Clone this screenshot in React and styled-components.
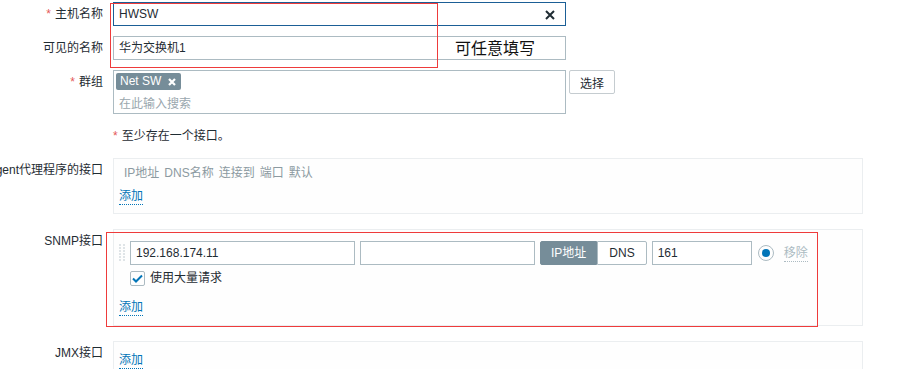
import styled, { createGlobalStyle } from "styled-components";

const GlobalStyle = createGlobalStyle`
  html, body {
    margin: 0;
    padding: 0;
    background: #ffffff;
  }
  body {
    font-family: "Liberation Sans", Arial, "Noto Sans CJK SC", sans-serif;
    font-size: 12px;
    color: #1f2c33;
  }
`;

const Page = styled.div`
  position: relative;
  width: 907px;
  height: 369px;
  overflow: hidden;
  padding-top: 2px;
  box-sizing: border-box;
`;

const FormGrid = styled.div`
  display: grid;
  grid-template-columns: 103px 1fr;
  column-gap: 10px;
  row-gap: 10px;
  align-items: start;
`;

const Label = styled.div`
  display: flex;
  justify-content: flex-end;
  white-space: nowrap;
  line-height: 24px;
  height: 24px;
`;

const Asterisk = styled.span`
  color: #e45959;
  margin-right: 4px;
`;

const Field = styled.div`
  display: flex;
  align-items: flex-start;
  gap: 3px;
`;

const TextBox = styled.div`
  position: relative;
  box-sizing: border-box;
  width: ${(p) => p.$w || 453}px;
  height: 24px;
  line-height: 22px;
  padding: 0 5px;
  border: 1px solid ${(p) => (p.$focus ? "#1b5f96" : "#acbbc2")};
  background: #fff;
  color: #1f2c33;
  white-space: nowrap;
`;

const ClearIcon = styled.svg`
  position: absolute;
  right: 10px;
  top: 7px;
`;

const MultiSelect = styled.div`
  box-sizing: border-box;
  width: 453px;
  height: 44px;
  border: 1px solid #acbbc2;
  padding: 2px;
  display: flex;
  flex-direction: column;
  align-items: flex-start;
  gap: 4px;
`;

const Tag = styled.span`
  display: inline-flex;
  align-items: center;
  gap: 7px;
  height: 17px;
  padding: 0 5px 0 4px;
  border-radius: 2px;
  background: #768d99;
  color: #fff;
  line-height: 17px;
`;

const Placeholder = styled.span`
  color: #9aa7ae;
  padding-left: 3px;
  line-height: 20px;
`;

const Button = styled.button`
  box-sizing: border-box;
  height: 24px;
  padding: 0 10px;
  border: 1px solid #c5ccd0;
  border-radius: 2px;
  background: #fff;
  color: #1f2c33;
  font: inherit;
`;

const Note = styled.div`
  line-height: 24px;
`;

const Table = styled.div`
  box-sizing: border-box;
  width: 750px;
  border: 1px solid #ebeef0;
  background: #fefefe;
  padding: ${(p) => p.$pad || "5px 5px 8px 5px"};
  margin-bottom: 5px;
  display: flex;
  flex-direction: column;
  align-items: flex-start;
`;

const HeaderRow = styled.div`
  display: flex;
  gap: 5px;
  padding-left: 5px;
  line-height: 18px;
  color: #8c9aa1;
`;

const AddLink = styled.span`
  color: #0275b8;
  margin-top: ${(p) => p.$top || 0}px;
  border-bottom: 1px dotted #0275b8;
  line-height: 16px;
  padding-top: 1px;
`;

const InterfaceRow = styled.div`
  display: flex;
  align-items: center;
  gap: 5px;
`;

const Toggle = styled.div`
  display: flex;
`;

const ToggleItem = styled.span`
  box-sizing: border-box;
  height: 24px;
  line-height: 22px;
  padding: 0 ${(p) => (p.$active ? 10 : 11)}px;
  border: 1px solid ${(p) => (p.$active ? "#768d99" : "#acbbc2")};
  border-radius: ${(p) => (p.$active ? "2px 0 0 2px" : "0 2px 2px 0")};
  background: ${(p) => (p.$active ? "#768d99" : "#fff")};
  color: ${(p) => (p.$active ? "#fff" : "#1f2c33")};
`;

const Radio = styled.span`
  box-sizing: border-box;
  width: 16px;
  height: 16px;
  border-radius: 50%;
  border: 1px solid #acbbc2;
  display: flex;
  align-items: center;
  justify-content: center;
  margin-left: 1px;

  &::after {
    content: "";
    width: 8px;
    height: 8px;
    border-radius: 50%;
    background: #0275b8;
  }
`;

const RemoveLink = styled.span`
  color: #acbbc2;
  border-bottom: 1px dotted #acbbc2;
  line-height: 16px;
  margin-left: 5px;
`;

const CheckRow = styled.label`
  display: flex;
  align-items: center;
  gap: 5px;
  margin: 4px 0 0 11px;
  line-height: 18px;
`;

const CheckBox = styled.span`
  box-sizing: border-box;
  width: 15px;
  height: 15px;
  border: 1px solid #acbbc2;
  border-radius: 2px;
  display: flex;
  align-items: center;
  justify-content: center;
`;

const RedFrame = styled.div`
  position: absolute;
  left: ${(p) => p.$x}px;
  top: ${(p) => p.$y}px;
  width: ${(p) => p.$w}px;
  height: ${(p) => p.$h}px;
  border: 1px solid #ee3b3b;
  box-sizing: border-box;
  pointer-events: none;
`;

const Annotation = styled.div`
  position: absolute;
  left: 455px;
  top: 36px;
  font-family: "Noto Sans CJK SC", sans-serif;
  font-size: 16px;
  line-height: 22px;
  color: #111;
`;

function DragHandle() {
  const dots = [];
  for (let r = 0; r < 6; r++) {
    for (let c = 0; c < 2; c++) {
      dots.push(
        <rect key={`${r}-${c}`} x={c * 4} y={r * 3} width="2" height="2" fill="#dfe4e7" />
      );
    }
  }
  return (
    <svg width="6" height="18" viewBox="0 0 6 18">
      {dots}
    </svg>
  );
}

export default function App() {
  return (
    <Page>
      <GlobalStyle />
      <FormGrid>
        <Label>
          <Asterisk>*</Asterisk>主机名称
        </Label>
        <Field>
          <TextBox $focus>
            HWSW
            <ClearIcon width="10" height="10" viewBox="0 0 10 10">
              <path d="M1 1 L9 9 M9 1 L1 9" stroke="#1f2c33" strokeWidth="2" />
            </ClearIcon>
          </TextBox>
        </Field>

        <Label>可见的名称</Label>
        <Field>
          <TextBox>华为交换机1</TextBox>
        </Field>

        <Label>
          <Asterisk>*</Asterisk>群组
        </Label>
        <Field>
          <MultiSelect>
            <Tag>
              Net SW
              <svg width="8" height="8" viewBox="0 0 8 8">
                <path d="M1 1 L7 7 M7 1 L1 7" stroke="#fff" strokeWidth="2.2" />
              </svg>
            </Tag>
            <Placeholder>在此输入搜索</Placeholder>
          </MultiSelect>
          <Button>选择</Button>
        </Field>

        <div />
        <Note>
          <Asterisk>*</Asterisk>至少存在一个接口。
        </Note>

        <Label>Agent代理程序的接口</Label>
        <Table>
          <HeaderRow>
            <span>IP地址</span>
            <span>DNS名称</span>
            <span>连接到</span>
            <span>端口</span>
            <span>默认</span>
          </HeaderRow>
          <AddLink $top={5}>添加</AddLink>
        </Table>

        <Label>SNMP接口</Label>
        <Table $pad="11px 5px 9px 5px">
          <InterfaceRow>
            <DragHandle />
            <TextBox $w={225}>192.168.174.11</TextBox>
            <TextBox $w={175} />
            <Toggle>
              <ToggleItem $active>IP地址</ToggleItem>
              <ToggleItem>DNS</ToggleItem>
            </Toggle>
            <TextBox $w={100}>161</TextBox>
            <Radio />
            <RemoveLink>移除</RemoveLink>
          </InterfaceRow>
          <CheckRow>
            <CheckBox>
              <svg width="11" height="9" viewBox="0 0 11 9">
                <path d="M1 4.5 L4 7.5 L10 1.5" fill="none" stroke="#0275b8" strokeWidth="2" />
              </svg>
            </CheckBox>
            使用大量请求
          </CheckRow>
          <AddLink $top={11}>添加</AddLink>
        </Table>

        <Label>JMX接口</Label>
        <Table $pad="9px 5px 9px 5px">
          <AddLink>添加</AddLink>
        </Table>
      </FormGrid>

      <RedFrame $x={110} $y={3} $w={328} $h={65} />
      <RedFrame $x={106} $y={232} $w={712} $h={95} />
      <Annotation>可任意填写</Annotation>
    </Page>
  );
}
